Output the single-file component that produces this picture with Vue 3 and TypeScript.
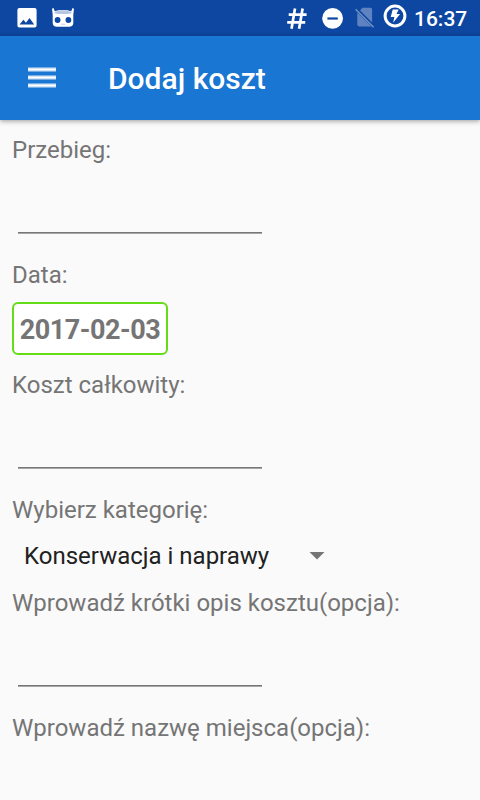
<script setup lang="ts">
import { ref } from 'vue'

const time = ref('16:37')
const date = ref('2017-02-03')
const category = ref('Konserwacja i naprawy')
const mileage = ref('')
const total = ref('')
const description = ref('')
</script>

<template>
  <div class="screen">
    <div class="status">
      <svg class="picture" width="20" height="20" viewBox="0 0 20 20">
        <path fill="#fff" fill-rule="evenodd" d="M2.4 0h15.2Q19.6 0 19.6 2v15.6q0 2-2 2H2.4q-2 0-2-2V2q0-2 2-2zM2.6 16.4h14.6l-4.7-6.3-3.5 4.7-2.6-3.1z" />
      </svg>
      <svg class="robot" width="22" height="20" viewBox="0 0 22 20">
        <path fill="#fff" d="M0 .8 1.5 0l1.3 3.2Q6 2 11 2t8.200 1.200L20.500 0l1.500.8-.7 5.700v8.200q0 4-4.300 4H5Q.7 18.700 .7 14.700V6.500z" />
        <path fill="#b7c7e3" d="M2.600 4Q6 2.300 11 2.300T19.400 4V5.400Q11 6.600 2.600 5.400z" />
        <circle cx="5.600" cy="12" r="2.900" fill="#0d47a1" />
        <circle cx="16.400" cy="12" r="2.900" fill="#0d47a1" />
        <path stroke="#9db5dc" stroke-width=".7" d="M9 16.200h4" />
      </svg>
      <span class="grow"></span>
      <svg class="hash" width="20" height="22" viewBox="0 0 20 22">
        <path fill="none" stroke="#fff" stroke-width="2.700" d="M8 .4 4.500 20.800M15.600.4l-3.500 20.400M1.700 6.700h17.900M.2 14.300h18" />
      </svg>
      <svg class="minus" width="22" height="22" viewBox="0 0 22 22">
        <circle cx="10.600" cy="11.300" r="10.400" fill="#fff" />
        <path stroke="#0d47a1" stroke-width="2.200" d="M5.400 11.500h10.400" />
      </svg>
      <svg class="nosim" width="20" height="22" viewBox="0 0 20 22">
        <path fill="#5e83c0" d="M7.400.8h8.200q1.500 0 1.500 1.500v14L4.800 3.700zM2.300 5.500l14.200 13.900H4.100q-1.800 0-1.800-1.800z" />
        <path fill="none" stroke="#0d47a1" stroke-width="1.300" d="M2.800 2.100 19 18.400" />
        <path fill="none" stroke="#6f92c9" stroke-width="1.500" d="M.6 2.300 18.600 20.300" />
      </svg>
      <svg class="battery" width="24" height="24" viewBox="0 0 24 24">
        <circle cx="12" cy="12" r="9.900" fill="none" stroke="#fff" stroke-width="3" />
        <path fill="#fff" d="M9.700 5.500h6l-2.200 4.600h3.600l-7 8.700 1.300-5.700H7.700z" />
      </svg>
      <span class="time">{{ time }}</span>
    </div>

    <header class="bar">
      <button class="menu" aria-label="Menu"><i></i><i></i><i></i></button>
      <h1>Dodaj koszt</h1>
    </header>

    <main class="form">
      <label for="mileage">Przebieg:</label>
      <div class="field"><input id="mileage" v-model="mileage" /></div>
      <label>Data:</label>
      <button class="date">{{ date }}</button>
      <label for="total">Koszt całkowity:</label>
      <div class="field"><input id="total" v-model="total" /></div>
      <label>Wybierz kategorię:</label>
      <div class="spinner">
        <span>{{ category }}</span>
        <svg width="16" height="8" viewBox="0 0 16 8"><path fill="#757575" d="M.5 0h15L8 7.5z" /></svg>
      </div>
      <label for="description">Wprowadź krótki opis kosztu(opcja):</label>
      <div class="field"><input id="description" v-model="description" /></div>
      <label>Wprowadź nazwę miejsca(opcja):</label>
    </main>
  </div>
</template>

<style>
body { background: #fafafa; }
</style>

<style scoped>
.screen {
  width: 480px;
  height: 800px;
  overflow: hidden;
  background: #fafafa;
  font-family: Roboto, sans-serif;
  display: flex;
  flex-direction: column;
}
svg { display: block; flex: none; }
.status {
  height: 36px;
  flex: none;
  box-sizing: border-box;
  background: linear-gradient(#0d47a1 32px, #0c3f90);
  display: flex;
  align-items: flex-start;
  padding: 0 12px 0 17px;
}
.picture { margin-top: 8px; }
.robot { margin: 8px 0 0 15px; }
.grow { flex: 1; }
.hash { margin: 8px 15px 0 0; }
.minus { margin: 7px 11px 0 0; }
.nosim { margin: 7px 8px 0 0; }
.battery { margin: 4px 7px 0 0; }
.time {
  width: 54px;
  margin-top: 7px;
  color: #fff;
  font-size: 21px;
  font-weight: 500;
  line-height: 25px;
  white-space: nowrap;
}
.bar {
  height: 84px;
  flex: none;
  background: #1976d2;
  display: flex;
  align-items: center;
  box-shadow: 0 1px 5px rgba(0, 0, 0, 0.4);
  clip-path: inset(0 0 -10px 0);
}
button { border: 0; padding: 0; background: none; font-family: inherit; }
.menu {
  width: 28px;
  margin: 0 52px 1px 28px;
  display: grid;
  gap: 3px;
}
.menu i {
  height: 5px;
  background: linear-gradient(#75ade4 1px, #d1e4f6 1px 2px, #fff 2px 3px, #d1e4f6 3px 4px, #75ade4 4px);
}
h1 { margin: 2px 0 0; color: #fff; font-size: 30px; font-weight: 500; line-height: 36px; }
.form {
  padding: 16px 12px 0;
  display: flex;
  flex-direction: column;
  align-items: flex-start;
}
label { font-size: 24px; line-height: 28px; color: #757575; white-space: nowrap; }
.field {
  height: 97px;
  box-sizing: border-box;
  padding: 20px 6px 27px;
}
input {
  display: block;
  box-sizing: border-box;
  width: 244px;
  height: 50px;
  padding: 0;
  border: 0;
  outline: none;
  background: linear-gradient(transparent 48px, #777 48px 49px, #a5a5a5 49px);
  font: 27px Roboto, sans-serif;
}
.date {
  box-sizing: border-box;
  width: 156px;
  height: 53px;
  margin: 13px 0 16px;
  padding-top: 2px;
  border: 2px solid #64dd17;
  border-radius: 6px;
  background: #fff;
  color: #757575;
  font-size: 27px;
  font-weight: 700;
  letter-spacing: -0.45px;
  line-height: 32px;
  text-align: center;
}
.spinner {
  height: 65px;
  box-sizing: border-box;
  padding: 18px 0 19px 12px;
  display: flex;
  align-items: center;
  justify-content: space-between;
  width: 313px;
  color: #212121;
  font-size: 24px;
  line-height: 28px;
}
</style>
